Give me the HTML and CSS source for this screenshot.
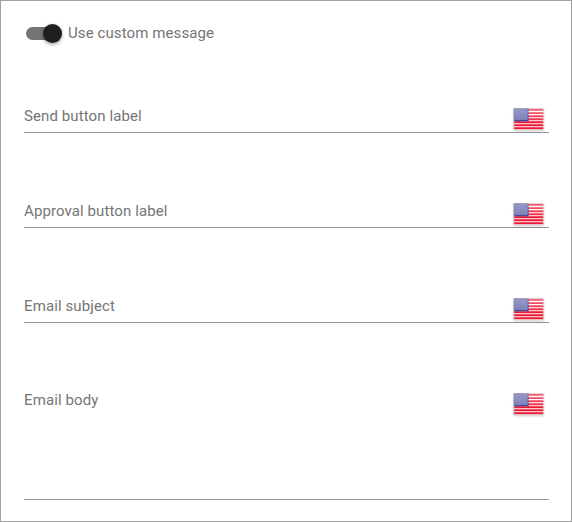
FILE: index.html
```html
<!DOCTYPE html>
<html lang="en">
<head>
<meta charset="utf-8">
<title>Custom message</title>
<link rel="stylesheet" href="styles.css">
</head>
<body>
<svg width="0" height="0" class="defs" aria-hidden="true">
  <defs>
    <pattern id="stars" width="3" height="3" patternUnits="userSpaceOnUse">
      <rect width="1.5" height="1.5" fill="#a0a4d0"/>
      <rect x="1.5" y="1.5" width="1.5" height="1.5" fill="#a0a4d0"/>
    </pattern>
    <linearGradient id="shine" x1="0" y1="0" x2="0" y2="1">
      <stop offset="0" stop-color="#fff" stop-opacity=".3"/>
      <stop offset=".5" stop-color="#fff" stop-opacity=".15"/>
      <stop offset=".55" stop-color="#fff" stop-opacity="0"/>
    </linearGradient>
    <symbol id="flag" viewBox="0 0 30 22">
      <rect width="30" height="22" fill="#fff"/>
      <path stroke="#f01530" stroke-width="1.9" d="M0 1.5h30M0 4.8h30M0 8h30M0 11h30M0 14h30M0 17h30M0 20h30"/>
      <rect width="15" height="13" fill="#343a92"/>
      <rect x="1" y="1" width="13" height="11" fill="url(#stars)"/>
      <rect width="30" height="22" fill="url(#shine)"/>
      <rect x=".5" y=".5" width="29" height="21" fill="none" stroke="#bbb" stroke-opacity=".5"/>
    </symbol>
  </defs>
</svg>
<main class="panel">
  <label class="switch">
    <span class="track"><span class="thumb"></span></span>
    <span class="caption">Use custom message</span>
  </label>
  <div class="field"><span>Send button label</span><svg class="flag"><use href="#flag"/></svg></div>
  <div class="field"><span>Approval button label</span><svg class="flag"><use href="#flag"/></svg></div>
  <div class="field"><span>Email subject</span><svg class="flag"><use href="#flag"/></svg></div>
  <div class="field body"><span>Email body</span><svg class="flag"><use href="#flag"/></svg></div>
</main>
</body>
</html>
```
FILE: styles.css
```css
* { box-sizing: border-box; }
body { margin: 0; background: #fff; }
.defs { display: block; position: absolute; }
.panel {
  width: 572px;
  height: 522px;
  padding: 22px 22px 0 23px;
  border: 1px solid #a2a2a2;
  font: 15px/20px Roboto, sans-serif;
  letter-spacing: .1px;
  color: #757575;
}
.switch {
  display: flex;
  align-items: center;
  gap: 6px;
  height: 21px;
  padding-left: 2px;
}
.caption { padding-bottom: 2px; }
.track {
  display: flex;
  align-items: center;
  justify-content: flex-end;
  width: 36px;
  height: 13px;
  border-radius: 7px;
  background: #757575;
}
.thumb {
  flex: none;
  width: 19px;
  height: 19px;
  border-radius: 50%;
  background: #1f1f1f;
  box-shadow: 0 2px 3px rgba(0,0,0,.2), 0 1px 5px rgba(0,0,0,.18);
}
.field {
  display: flex;
  justify-content: space-between;
  align-items: flex-start;
  height: 27px;
  margin-top: 68px;
  padding-right: 5px;
  border-bottom: 1px solid #949494;
}
.switch + .field { margin-top: 62px; }
.flag {
  width: 30px;
  height: 22px;
  margin-top: 2px;
  transform: translate(-.4px, .3px);
  filter: drop-shadow(0 1px 1px rgba(0,0,0,.2));
}
.field.body { height: 110px; margin-top: 67px; }
.body .flag { margin-top: 3px; }
```
